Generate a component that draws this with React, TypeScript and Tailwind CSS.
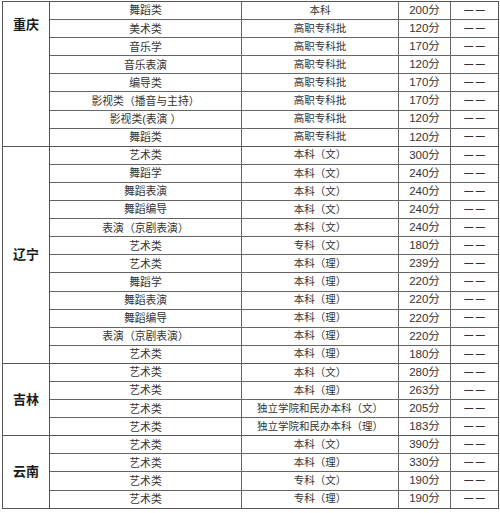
import React from "react";

type Row = [string, string, string];

type Section = {
  province: string;
  top?: boolean;
  rows: Row[];
};

const sections: Section[] = [
  {
    province: "重庆",
    top: true,
    rows: [
      ["舞蹈类", "本科", "200分"],
      ["美术类", "高职专科批", "120分"],
      ["音乐学", "高职专科批", "170分"],
      ["音乐表演", "高职专科批", "120分"],
      ["编导类", "高职专科批", "170分"],
      ["影视类（播音与主持）", "高职专科批", "170分"],
      ["影视类(表演 ）", "高职专科批", "120分"],
      ["舞蹈类", "高职专科批", "120分"],
    ],
  },
  {
    province: "辽宁",
    rows: [
      ["艺术类", "本科（文）", "300分"],
      ["舞蹈学", "本科（文）", "240分"],
      ["舞蹈表演", "本科（文）", "240分"],
      ["舞蹈编导", "本科（文）", "240分"],
      ["表演（京剧表演）", "本科（文）", "240分"],
      ["艺术类", "专科（文）", "180分"],
      ["艺术类", "本科（理）", "239分"],
      ["舞蹈学", "本科（理）", "220分"],
      ["舞蹈表演", "本科（理）", "220分"],
      ["舞蹈编导", "本科（理）", "220分"],
      ["表演（京剧表演）", "本科（理）", "220分"],
      ["艺术类", "本科（理）", "180分"],
    ],
  },
  {
    province: "吉林",
    rows: [
      ["艺术类", "本科（文）", "280分"],
      ["艺术类", "本科（理）", "263分"],
      ["艺术类", "独立学院和民办本科（文）", "205分"],
      ["艺术类", "独立学院和民办本科（理）", "183分"],
    ],
  },
  {
    province: "云南",
    rows: [
      ["艺术类", "本科（文）", "390分"],
      ["艺术类", "本科（理）", "330分"],
      ["艺术类", "专科（文）", "190分"],
      ["艺术类", "专科（理）", "190分"],
    ],
  },
];

const font = {
  fontFamily: '"Liberation Sans", "Noto Sans CJK SC", sans-serif',
};

const App: React.FC = () => {
  return (
    <div className="w-[500px] h-[513px] bg-white overflow-hidden" style={font}>
      <div className="mt-[1px] ml-[2px] w-[497px] border border-[#555] text-[10.8px] text-[#333]">
        {sections.map((section, si) => (
          <div
            key={section.province}
            className={
              si === sections.length - 1
                ? "flex"
                : "flex border-b border-[#555]"
            }
          >
            <div
              className={
                section.top
                  ? "w-[47px] shrink-0 flex justify-center pt-[13px] border-r border-[#555] text-[13px] font-bold text-[#1a1a1a]"
                  : "w-[47px] shrink-0 flex items-center justify-center border-r border-[#555] text-[13px] font-bold text-[#1a1a1a]"
              }
            >
              {section.province}
            </div>
            <div className="flex-1 flex flex-col">
              {section.rows.map((row, ri) => (
                <div
                  key={ri}
                  className={
                    ri === section.rows.length - 1
                      ? "flex h-[17.1px]"
                      : "flex h-[18.1px] border-b border-[#666]"
                  }
                >
                  <div className="w-[192px] shrink-0 flex items-center justify-center border-r border-[#666]">
                    {row[0]}
                  </div>
                  <div className="w-[157px] shrink-0 flex items-center justify-center border-r border-[#666] text-[10.5px]">
                    {row[1]}
                  </div>
                  <div className="w-[52px] shrink-0 flex items-center justify-center border-r border-[#666] text-[11.5px]">
                    {row[2]}
                  </div>
                  <div className="flex-1 flex items-center justify-center text-[9px] text-[#333] font-bold">
                    — —
                  </div>
                </div>
              ))}
            </div>
          </div>
        ))}
      </div>
    </div>
  );
};

export default App;
